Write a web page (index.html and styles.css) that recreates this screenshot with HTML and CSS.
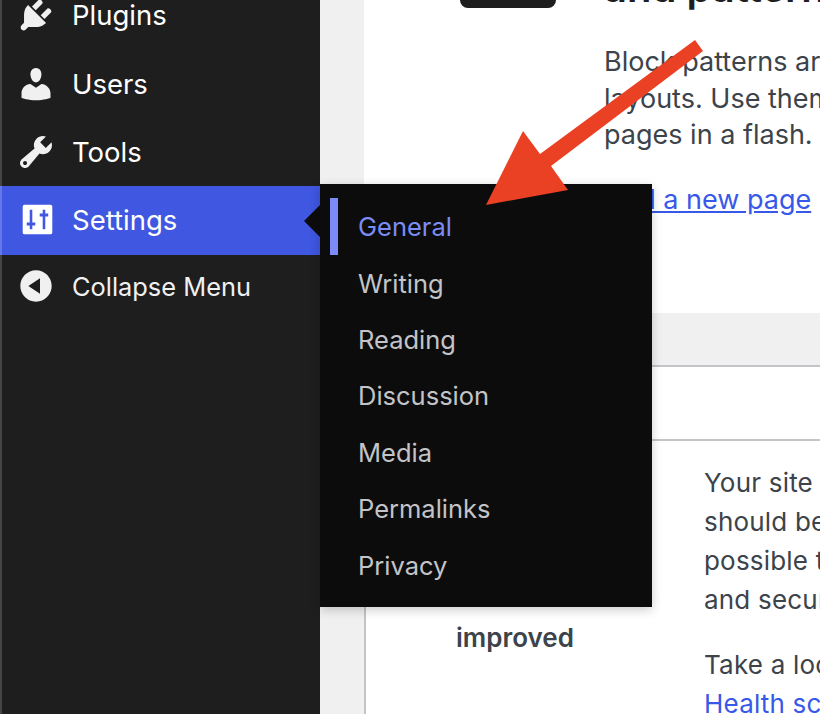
FILE: index.html
```html
<!DOCTYPE html>
<html lang="en">
<head>
<meta charset="utf-8">
<title>Settings menu</title>
<link rel="stylesheet" href="styles.css">
</head>
<body>
<div class="page">
  <aside class="sidebar">
    <ul class="nav">
      <li class="nav-item nav-item-first">
        <svg class="nav-icon" viewBox="0 0 20 20"><path d="M13.11 4.36L9.87 7.6 8 5.73l3.24-3.24c.35-.34 1.05-.2 1.56.32.52.51.66 1.21.31 1.55zm-8 1.77l.91-1.12 9.01 9.01-1.19.84c-.71.71-2.63 1.16-3.82 1.16H6.14L4.9 17.26c-.59.59-1.54.59-2.12 0-.59-.58-.59-1.53 0-2.12l1.24-1.24v-3.88c0-1.13.4-3.19 1.09-3.89zm7.26 3.97l3.24-3.24c.34-.35 1.04-.21 1.55.31.52.51.66 1.21.31 1.55l-3.24 3.25z"/></svg>
        <span>Plugins</span>
      </li>
      <li class="nav-item">
        <svg class="nav-icon" viewBox="0 0 20 20"><path d="M10 9.25c-2.27 0-2.73-3.44-2.73-3.44C7 4.02 7.82 2 9.97 2c2.16 0 2.98 2.02 2.71 3.81 0 0-.41 3.44-2.68 3.44zm0 2.57L12.72 10c2.39 0 4.52 2.33 4.52 4.53v2.49s-3.65 1.13-7.24 1.13c-3.65 0-7.24-1.13-7.24-1.13v-2.49c0-2.25 1.94-4.48 4.47-4.48z"/></svg>
        <span>Users</span>
      </li>
      <li class="nav-item">
        <svg class="nav-icon" viewBox="0 0 20 20"><path d="M16.68 9.77c-1.34 1.34-3.3 1.67-4.95.99l-5.41 6.52c-.99.99-2.59.99-3.58 0s-.99-2.59 0-3.57l6.52-5.42c-.68-1.65-.35-3.61.99-4.95 1.28-1.28 3.12-1.62 4.72-1.06l-2.89 2.89 2.82 2.82 2.86-2.87c.53 1.58.18 3.39-1.08 4.65zM3.81 16.21c.4.39 1.04.39 1.43 0 .4-.4.4-1.04 0-1.43-.39-.4-1.03-.4-1.43 0-.39.39-.39 1.03 0 1.43z"/></svg>
        <span>Tools</span>
      </li>
      <li class="nav-item nav-item-active">
        <svg class="nav-icon" viewBox="0 0 20 20"><path fill-rule="evenodd" d="M3 2h14a1 1 0 0 1 1 1v14a1 1 0 0 1-1 1H3a1 1 0 0 1-1-1V3a1 1 0 0 1 1-1zM5.8 4.7h1.4v6.9h1.6v1.6H7.2v2.1H5.8v-2.1H4.2v-1.6h1.6zM12.8 4.7h1.4v2.1h1.6v1.6h-1.6v6.9h-1.4V8.4h-1.6V6.8h1.6z"/></svg>
        <span>Settings</span>
      </li>
      <li class="nav-item nav-item-collapse">
        <svg class="nav-icon" viewBox="0 0 20 20"><path d="M10 2.16c4.33 0 7.84 3.51 7.84 7.84s-3.51 7.84-7.84 7.84S2.16 14.33 2.16 10 5.71 2.16 10 2.16zm2 11.72V6.12L6.18 9.97z"/></svg>
        <span>Collapse Menu</span>
      </li>
    </ul>
  </aside>

  <main class="main">
    <section class="welcome">
      <div class="tile"></div>
      <div class="welcome-body">
        <h2 class="welcome-title">and patterns</h2>
        <p class="welcome-text">Block patterns are pre-configured block<br>layouts. Use them to get inspired or create new<br>pages in a flash.</p>
        <a class="welcome-link" href="#">Add a new page</a>
      </div>
    </section>

    <section class="health">
      <div class="health-head"></div>
      <div class="health-body">
        <div class="health-status">
          <p class="health-label">Should be<br>improved</p>
        </div>
        <div class="health-copy">
          <p class="health-text">Your site has critical issues that<br>should be addressed as soon as<br>possible to improve its performance<br>and security.</p>
          <p class="health-text">Take a look at the items on the Site<br><a class="health-link" href="#">Health screen.</a></p>
        </div>
      </div>
    </section>
  </main>

  <ul class="submenu">
    <li class="sub-item sub-item-active">General</li>
    <li class="sub-item">Writing</li>
    <li class="sub-item">Reading</li>
    <li class="sub-item">Discussion</li>
    <li class="sub-item">Media</li>
    <li class="sub-item">Permalinks</li>
    <li class="sub-item">Privacy</li>
  </ul>

  <svg class="arrow" viewBox="0 0 820 714"><polygon points="695,40 703,51 551,166 568,190 486,205 523,131 540,154"/></svg>
</div>
</body>
</html>
```

FILE: styles.css
```css
* { box-sizing: border-box; }

html, body {
  margin: 0;
  padding: 0;
  height: 100%;
  overflow: hidden;
}

body {
  font-family: Inter, "Liberation Sans", sans-serif;
  background: #f0f0f1;
}

.page {
  position: relative;
  display: flex;
  width: 820px;
  height: 714px;
  overflow: hidden;
}

/* Sidebar */
.sidebar {
  flex: 0 0 320px;
  background: #1e1e1e;
  border-left: 2px solid #444;
}

.nav {
  list-style: none;
  margin: -18px 0 0;
  padding: 0;
}

.nav-item {
  display: flex;
  align-items: center;
  gap: 16px;
  height: 68px;
  padding-left: 14px;
  color: #fff;
  font-size: 27.5px;
}

.nav-item-first { padding-bottom: 2px; }

.nav-icon {
  flex: none;
  width: 40px;
  height: 40px;
  fill: #f0f0f1;
}

.nav-item-active {
  position: relative;
  height: 69px;
  margin-left: -2px;
  padding-left: 16.5px;
  padding-bottom: 2px;
  gap: 16.5px;
  background: #3f57e1;
  border-left: 2px solid #6478ea;
}

.nav-item-active .nav-icon {
  width: 37px;
  height: 37px;
  fill: #fff;
}

.nav-item-active::after {
  content: "";
  position: absolute;
  right: 0;
  top: 19px;
  border: 16px solid transparent;
  border-left-width: 0;
  border-right-color: #0c0c0c;
}

.nav-item-collapse {
  height: 64px;
  padding-bottom: 2px;
  color: #f0f0f1;
  font-size: 25.4px;
}

/* Main */
.main {
  flex: 1;
  min-width: 0;
  padding-left: 44px;
}

.welcome {
  display: flex;
  height: 313px;
  padding-left: 96px;
  background: #fff;
  overflow: hidden;
}

.tile {
  flex: none;
  width: 96px;
  height: 8px;
  background: #1e1e1e;
  border-radius: 0 0 8px 8px;
}

.welcome-body {
  margin-left: 48px;
  margin-top: -36px;
  white-space: nowrap;
}

.welcome-title {
  margin: 0;
  color: #1e1e1e;
  font-size: 40px;
  font-weight: 600;
  line-height: 48px;
}

.welcome-text {
  margin: 32px 0 0;
  color: #3c434a;
  font-size: 27px;
  line-height: 36.6px;
}

.welcome-link {
  display: inline-block;
  margin-top: 28px;
  color: #3858e9;
  font-size: 27px;
  line-height: 36.4px;
}

.health {
  height: 349px;
  margin-top: 52px;
  background: #fff;
  border-top: 2px solid #c3c4c7;
  border-left: 2px solid #c3c4c7;
}

.health-head {
  height: 74px;
  border-bottom: 2px solid #c3c4c7;
}

.health-body {
  display: flex;
  white-space: nowrap;
}

.health-status {
  flex: 0 0 338px;
  padding-left: 90px;
  padding-top: 133.5px;
}

.health-label {
  margin: 0;
  color: #3c434a;
  font-size: 26px;
  line-height: 42px;
  font-weight: 600;
}

.health-copy {
  padding-top: 22px;
  min-width: 0;
}

.health-text {
  margin: 0 0 26px;
  color: #3c434a;
  font-size: 26px;
  letter-spacing: .2px;
  line-height: 39px;
}

.health-link { color: #3858e9; text-decoration: none; }

/* Flyout */
.submenu {
  position: absolute;
  left: 320px;
  top: 184px;
  width: 332px;
  height: 423px;
  margin: 0;
  padding: 14.2px 0 0 10px;
  list-style: none;
  background: #0c0c0c;
  box-shadow: 0 3px 10px rgba(0, 0, 0, .2);
}

.sub-item {
  height: 56.4px;
  padding-left: 28px;
  color: #c3c4c7;
  font-size: 25.5px;
  line-height: 58px;
}

.sub-item-active {
  color: #7b8cf5;
  border-left: 8px solid #7b8cfa;
  padding-left: 20px;
}

.arrow {
  position: absolute;
  left: 0;
  top: 0;
  width: 820px;
  height: 714px;
  fill: #ea4024;
  pointer-events: none;
}
```
